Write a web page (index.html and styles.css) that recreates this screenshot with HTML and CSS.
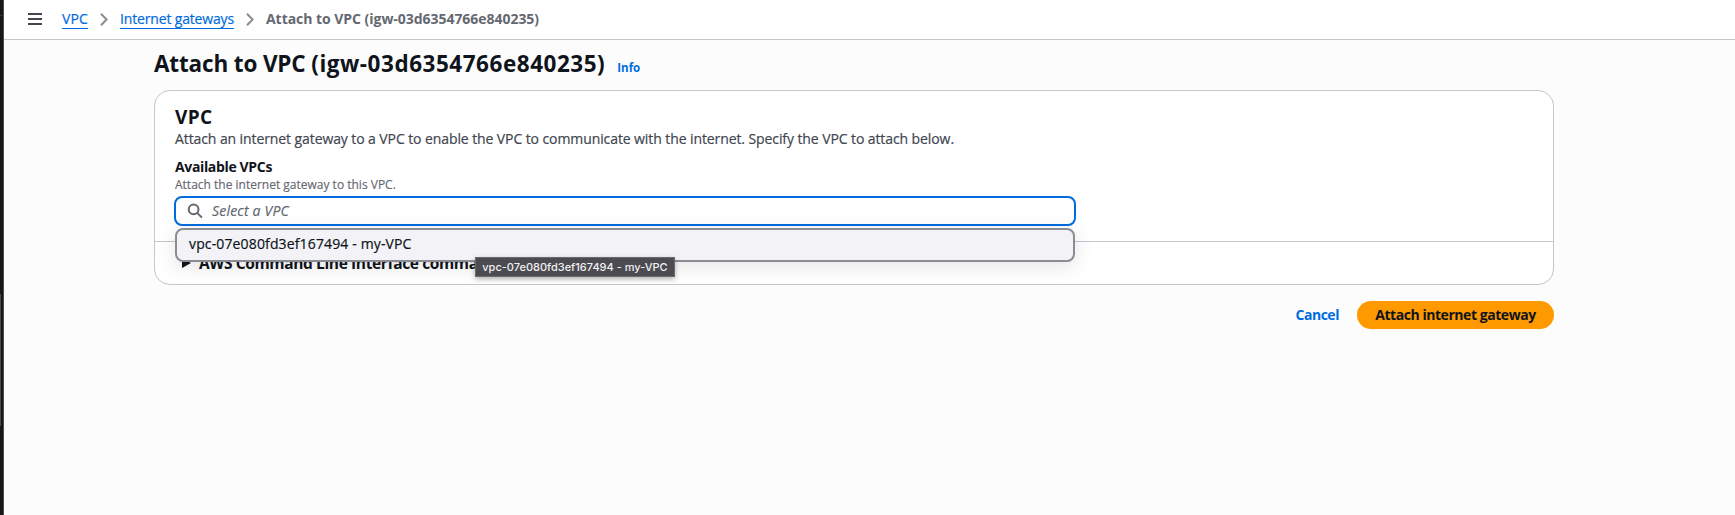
FILE: index.html
```html
<!DOCTYPE html>
<html lang="en">
<head>
<meta charset="utf-8">
<title>Attach to VPC</title>
<link rel="stylesheet" href="styles.css">
</head>
<body>
<div class="app">
  <aside class="edge"><span class="edge-mark"></span><span class="edge-thumb"></span></aside>
  <div class="page">
    <header class="topbar">
      <svg class="menu" width="14" height="12" viewBox="0 0 14 12"><path d="M0 1h14M0 6h14M0 11h14" stroke="#424650" stroke-width="2"/></svg>
      <nav class="crumbs">
        <a class="crumb crumb-vpc">VPC</a>
        <svg class="chevron" width="8" height="13" viewBox="0 0 8 13"><path d="M1 .8 6.6 6.5 1 12.2" fill="none" stroke="#8c8c94" stroke-width="2"/></svg>
        <a class="crumb crumb-igw">Internet gateways</a>
        <svg class="chevron" width="8" height="13" viewBox="0 0 8 13"><path d="M1 .8 6.6 6.5 1 12.2" fill="none" stroke="#8c8c94" stroke-width="2"/></svg>
        <span class="current">Attach to VPC (igw-03d6354766e840235)</span>
      </nav>
    </header>
    <main class="content">
      <div class="title-row">
        <h1 class="title">Attach to VPC <span class="title-id">(igw-03d6354766e840235)</span></h1>
        <a class="info">Info</a>
      </div>
      <section class="card">
        <div class="card-body">
          <h2 class="card-title">VPC</h2>
          <p class="card-text">Attach an internet gateway to a VPC to enable the VPC to communicate with the internet. Specify the VPC to attach below.</p>
          <div class="label">Available VPCs</div>
          <div class="hint">Attach the internet gateway to this VPC.</div>
          <div class="select">
            <div class="input">
              <svg width="16" height="16" viewBox="0 0 16 16" fill="none" stroke="#656871" stroke-width="2"><circle cx="6.6" cy="6.3" r="4.9"/><path d="m10.2 9.9 4.7 4.7"/></svg>
              <span class="placeholder">Select a VPC</span>
            </div>
            <div class="dropdown">
              <span class="option">vpc-07e080fd3ef167494 - my-VPC</span>
              <div class="tooltip">vpc-07e080fd3ef167494 - my-VPC</div>
            </div>
          </div>
        </div>
        <div class="card-footer">
          <svg width="9" height="10" viewBox="0 0 9 10"><path d="M0 0 9 5 0 10z" fill="#0f141a"/></svg>
          <span class="cli">AWS Command Line Interface command</span>
        </div>
      </section>
      <div class="actions">
        <a class="cancel">Cancel</a>
        <button class="primary">Attach internet gateway</button>
      </div>
    </main>
  </div>
</div>
</body>
</html>
```
FILE: styles.css
```css
* { box-sizing: border-box; }
body {
  margin: 0;
  font-family: "Open Sans", "Noto Sans", sans-serif;
  font-size: 14px;
  line-height: 20px;
  color: #0f141a;
  background: #fcfcfd;
  white-space: nowrap;
  overflow: hidden;
}
h1, h2, p { margin: 0; }
.app { display: flex; height: 515px; }
.edge {
  position: relative;
  width: 4px;
  background: #191817;
  border-right: 1px solid #4c4b49;
}
.edge-mark { position: absolute; left: 0; top: 15px; width: 3px; height: 1px; background: #33322f; }
.edge-thumb { position: absolute; left: 0; top: 294px; width: 1px; height: 132px; background: #4c4c4c; }
.page { flex: 1; }

.topbar {
  display: flex;
  align-items: flex-start;
  height: 40px;
  background: #fff;
  border-bottom: 1px solid #c6c6cd;
  padding-left: 24px;
}
.menu { margin-top: 13px; }
.crumbs { display: flex; align-items: flex-start; margin: 9px 0 0 20px; }
.crumb { height: 20px; color: #006ce0; border-bottom: 1px solid #006ce0; -webkit-text-stroke: .2px; }
.crumb-vpc { width: 26px; letter-spacing: .14px; }
.crumb-igw { width: 114px; letter-spacing: -.16px; }
.chevron { margin: 4px 12px 0; }
.current { font-weight: 700; color: #656871; letter-spacing: -.04px; }

.content { padding: 10px 0 0 150px; }
.title-row { display: flex; align-items: baseline; height: 40px; }
.title { font-size: 22.5px; line-height: 28px; letter-spacing: -.15px; }
.title-id { letter-spacing: .53px; }
.info { margin-left: 12px; font-size: 11.5px; line-height: 16px; font-weight: 700; color: #006ce0; }

.card {
  width: 1400px;
  height: 195px;
  border: 1px solid #c6c6cd;
  border-radius: 16px;
  background: #fff;
}
.card-body { height: 151px; padding: 14px 20px 0; border-bottom: 1px solid #c6c6cd; }
.card-title { font-size: 19px; line-height: 24px; letter-spacing: .3px; }
.card-text { color: #424650; letter-spacing: -.092px; -webkit-text-stroke: .2px; }
.label { margin-top: 8px; font-weight: 700; letter-spacing: -.35px; }
.hint { font-size: 12px; line-height: 16px; color: #656871; -webkit-text-stroke: .15px; }
.select { position: relative; width: 902px; margin: 3px 0 0 -1px; }
.input {
  display: flex;
  align-items: center;
  height: 30px;
  padding-left: 11px;
  border: 2px solid #006ce0;
  border-radius: 8px;
  background: #fff;
}
.placeholder { margin-left: 9px; font-style: italic; color: #656871; letter-spacing: .2px; -webkit-text-stroke: .2px; }
.dropdown {
  position: absolute;
  left: 1px;
  top: 32px;
  width: 900px;
  height: 34px;
  padding: 4px 12px;
  border: 2px solid #8c8c94;
  border-radius: 8px;
  background: #f3f3f7;
  box-shadow: 0 4px 20px 1px rgba(0, 7, 22, .1);
}
.option { letter-spacing: .14px; -webkit-text-stroke: .2px; }
.tooltip {
  position: absolute;
  left: 298px;
  top: 27px;
  width: 200px;
  height: 20px;
  border: 1px solid #6b6a70;
  background: #4c4b51;
  color: #f0f0f2;
  font: 500 11px/18px Inter, sans-serif;
  text-align: center;
  box-shadow: 0 2px 5px rgba(0, 0, 0, .3);
}
.card-footer { display: flex; align-items: center; height: 41px; padding-left: 27px; }
.cli { margin-left: 8px; font-size: 15.5px; font-weight: 700; letter-spacing: -.37px; }

.actions { display: flex; width: 1400px; margin-top: 16px; justify-content: flex-end; align-items: center; }
.cancel { margin-right: 18px; font-weight: 700; color: #006ce0; letter-spacing: -.46px; }
.primary {
  width: 197px;
  height: 28px;
  padding: 0;
  border: 0;
  border-radius: 14px;
  background: #ff9900;
  color: #0f141a;
  font: inherit;
  font-weight: 700;
  letter-spacing: -.447px;
}
```
